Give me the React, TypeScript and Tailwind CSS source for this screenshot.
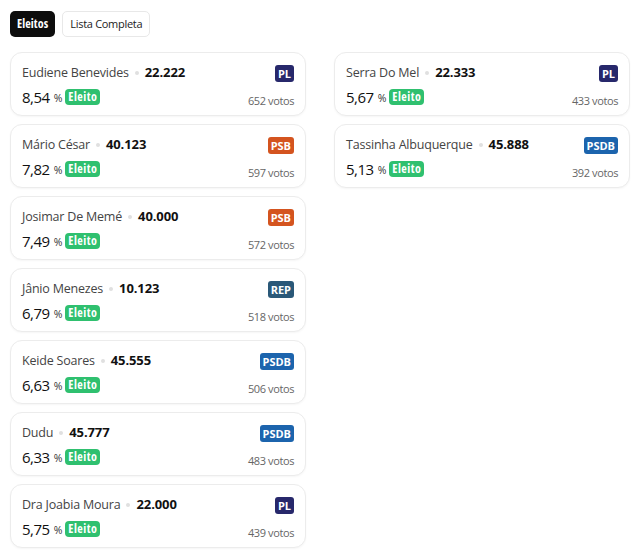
import React from "react";

type C = { name: string; num: string; pct: string; votes: string; party: string };

const left: C[] = [
  { name: "Eudiene Benevides", num: "22.222", pct: "8,54", votes: "652", party: "PL" },
  { name: "Mário César", num: "40.123", pct: "7,82", votes: "597", party: "PSB" },
  { name: "Josimar De Memé", num: "40.000", pct: "7,49", votes: "572", party: "PSB" },
  { name: "Jânio Menezes", num: "10.123", pct: "6,79", votes: "518", party: "REP" },
  { name: "Keide Soares", num: "45.555", pct: "6,63", votes: "506", party: "PSDB" },
  { name: "Dudu", num: "45.777", pct: "6,33", votes: "483", party: "PSDB" },
  { name: "Dra Joabia Moura", num: "22.000", pct: "5,75", votes: "439", party: "PL" },
];
const right: C[] = [
  { name: "Serra Do Mel", num: "22.333", pct: "5,67", votes: "433", party: "PL" },
  { name: "Tassinha Albuquerque", num: "45.888", pct: "5,13", votes: "392", party: "PSDB" },
];

function partyClass(p: string) {
  if (p === "PL") return "bg-[#27286b]";
  if (p === "PSB") return "bg-[#d4541f]";
  if (p === "REP") return "bg-[#2a5878]";
  return "bg-[#1c64ad]";
}

function Card({ c }: { c: C }) {
  return (
    <div className="h-[64px] rounded-xl border border-[#ececec] bg-white px-[11px] pt-[10px] shadow-[0_1px_2px_rgba(0,0,0,0.04)]">
      <div className="flex h-[20px] items-center justify-between">
        <div className="flex items-center">
          <span className="text-[12.5px] tracking-[-0.2px] text-[#444]">{c.name}</span>
          <span className="mx-[6px] h-[4px] w-[4px] rounded-full bg-[#e0e0e0]" />
          <span className="text-[13px] font-bold tracking-[-0.1px] text-[#111]">{c.num}</span>
        </div>
        <span
          className={`mt-[1px] h-[17px] rounded-[3px] px-[3px] text-[11px] font-bold leading-[17px] text-white ${partyClass(c.party)}`}
        >
          {c.party}
        </span>
      </div>
      <div className="mt-[4px] flex h-[20px] items-center justify-between">
        <div className="flex items-center">
          <span className="text-[15px] leading-none tracking-[-0.5px] text-[#111]">{c.pct}</span>
          <span className="ml-[4px] mt-[3px] text-[10.5px] text-[#333]">%</span>
          <span className="ml-[3px] h-[16px] rounded-[4px] bg-[#2fc06f] px-[3px] text-[12px] font-bold leading-[16px] tracking-[0.5px] text-white font-stretch-[75%]">
            Eleito
          </span>
        </div>
        <span className="mt-[9px] text-[11px] tracking-[-0.4px] text-[#666]">{c.votes} votos</span>
      </div>
    </div>
  );
}

export default function App() {
  return (
    <div
      className="min-h-[555px] bg-white pl-[10px] pr-[10px] pt-[11px]"
      style={{ fontFamily: '"Open Sans", "Noto Sans", sans-serif' }}
    >
      <div className="flex gap-[7px]">
        <button className="h-[26px] rounded-[5px] bg-[#0d0d0d] px-[7px] text-[12px] font-bold tracking-[0.1px] text-white font-stretch-[75%]">
          Eleitos
        </button>
        <button className="h-[26px] rounded-[5px] border border-[#e8e8e8] bg-white px-[7px] text-[11px] tracking-[-0.3px] text-[#222]">
          Lista Completa
        </button>
      </div>
      <div className="mt-[15px] grid grid-cols-2 gap-x-[28px]">
        <div className="flex flex-col gap-[8px]">
          {left.map((c) => (
            <Card key={c.name} c={c} />
          ))}
        </div>
        <div className="flex flex-col gap-[8px]">
          {right.map((c) => (
            <Card key={c.name} c={c} />
          ))}
        </div>
      </div>
    </div>
  );
}
